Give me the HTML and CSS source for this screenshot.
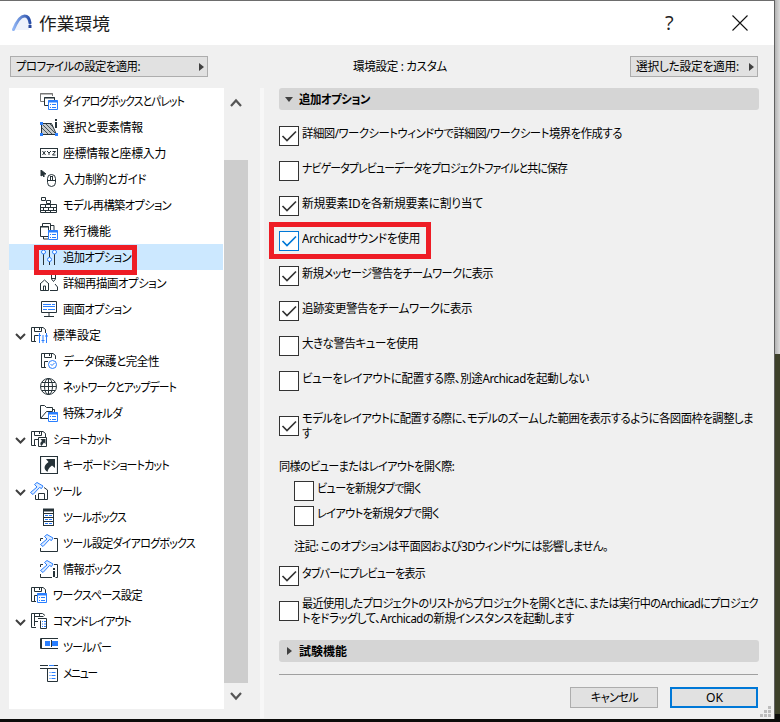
FILE: index.html
```html
<!DOCTYPE html>
<html lang="ja">
<head>
<meta charset="utf-8">
<title>作業環境</title>
<link rel="stylesheet" href="styles.css">
</head>
<body>
<svg class="defs" width="0" height="0">
  <defs>
    <g id="hammer" fill="#dcebff" stroke="#2a7fff"><path d="M4.500 2.500 7 .5l6 3.500-1.500 2.500-2-1L3 12.500.5 10.500 7 5z"/></g>
    <g id="window"><path d="M8.500 8.500h9v9h-9z" fill="#fff" stroke="#2a7fff"/><path d="M8 9.500h10" stroke="#2a7fff" stroke-width="2"/><path d="M10 12.500h1m1 0h4m-6 3h1m1 0h4" stroke="#2a7fff"/></g>
    <g id="disk"><path d="M15.500 7V3.500L13 1.500H1.500v14H6M4.500 2v3.500h7V2M9.500 2v2M4.500 15V9.500H8"/></g>
    <g id="chev"><path d="m1 1 4.500 4.500L10 1" fill="none" stroke="#404040" stroke-width="2"/></g>
    <g id="tick"><path d="m2.500 9 4.500 4.500L16 4.500" fill="none" stroke="currentColor" stroke-width="1.700"/></g>
  </defs>
</svg>
<div class="dialog">
  <header class="titlebar">
    <svg class="logo" width="22" height="20" viewBox="0 0 22 20"><defs><linearGradient id="lg" x1="0" x2="1"><stop offset="0" stop-color="#8fb4f4"/><stop offset="1" stop-color="#2a4fa8"/></linearGradient></defs><path d="M4 17C8 6 13 1 18 6v11z" fill="#eef2fb"/><path d="M2.500 16.500C6 8 9.500 3 13.500 3c3.500 0 5 3 5.500 7" fill="none" stroke="url(#lg)" stroke-width="3" stroke-linecap="round"/><path d="M17.500 12h3v3h-3z" fill="#27479b"/></svg>
    <h1><span class="t" data-w="71">作業環境</span></h1>
    <span class="help">?</span>
    <svg class="close" width="16" height="16" viewBox="0 0 16 16"><path d="m.5.5 15 15m0-15-15 15" stroke="#111" stroke-width="1.100"/></svg>
  </header>
  <div class="toolbar">
    <button class="drop profile"><span class="t" data-w="124">プロファイルの設定を適用:</span><i class="tri"></i></button>
    <div class="status"><span class="t" data-w="94">環境設定 : カスタム</span></div>
    <button class="drop chosen"><span class="t" data-w="103">選択した設定を適用:</span><i class="tri"></i></button>
  </div>
  <div class="body">
    <ul class="tree">
      <li class="sub"><svg class="ic" viewBox="0 0 18 18"><path d="M12.500 4V1.500H.5v8H4M0 2h13" stroke="#777"/><path d="M8 13.500H4.500v-8h10V8M4 6h11"/><use href="#window"/></svg><span class="t" data-w="121">ダイアログボックスとパレット</span></li>
      <li class="sub"><svg class="ic" viewBox="0 0 18 18"><path d="M1.500 5.500h10l5 11h-15z" fill="#c4c8ca"/><path d="m2 6 10 10M2 10l6 6M6 6l10 10M10 6l3 3" stroke-width=".8"/><path d="M0 4h3v3H0zm0 11h3v3H0zm15 0h3v3h-3z" fill="#2a7fff" stroke="none"/><path d="M16 1v2m0 1v6" stroke-width="2"/></svg><span class="t" data-w="80">選択と要素情報</span></li>
      <li class="sub"><svg class="ic" viewBox="0 0 18 18"><rect x=".5" y="4.500" width="17" height="9"/><path d="m2.500 7 3 4m0-4-3 4M7 7l2 2 2-2M9 9v2m3.500-3.500h3L12.500 11h3"/></svg><span class="t" data-w="103">座標情報と座標入力</span></li>
      <li class="sub"><svg class="ic" viewBox="0 0 18 18"><path d="M1 0v6l1.500-1L4 7V4h2z" fill="#263238"/><rect x="7.500" y="4.500" width="8" height="12" rx="4"/><path d="M7.500 10.500h8"/><rect x="10.500" y="6.500" width="2" height="4" fill="#fff"/></svg><span class="t" data-w="83">入力制約とガイド</span></li>
      <li class="sub"><svg class="ic" viewBox="0 0 18 18"><path d="M1.500 1.500h4v3h-4zm5 3h4v3h-4zM.5 8.500h16v8H.5zM0 11.500h17M0 14.500h17M5.500 9v2m5-2v2m-7 1v2m5-2v2m5-2v2m-8 1v2m5-2v2"/></svg><span class="t" data-w="108">モデル再構築オプション</span></li>
      <li class="sub"><svg class="ic" viewBox="0 0 18 18"><path d="M.5 4.500h8v10h-8zM2.500 4V1.500h8V11M0 5h9M11 3.500h3V8M3.500 15v2H8"/><use href="#window"/></svg><span class="t" data-w="48">発行機能</span></li>
      <li class="sub selected"><svg class="ic" viewBox="0 0 18 18"><path d="M3.500 5v12M9.500 0v9m0 4v4M14.500 5v12"/><g stroke="#2a7fff" fill="#fff"><circle cx="3.500" cy="4" r="2"/><circle cx="9.500" cy="11.500" r="2"/><circle cx="14.500" cy="4" r="2"/></g></svg><span class="t" data-w="68">追加オプション</span><div class="mark mark-tree"></div></li>
      <li class="sub"><svg class="ic" viewBox="0 0 18 18"><path d="M.5 9.500v7h8v-7M0 10l4.500-4L9 10M3.500 16v-4h2v4M11.500 0v5l2 2.500 2-2.500V0M11.500 4.500h4M10 16.500h7.500V13L15 10"/></svg><span class="t" data-w="103">詳細再描画オプション</span></li>
      <li class="sub"><svg class="ic" viewBox="0 0 18 18"><path d="M1.500 1.500h15v11h-15zM9 13v3M4 16.500h10"/><path d="M3 4.500h8m1 0h3M3 6.500h12M3 9.500h4m1 0h7" stroke="#2a7fff"/></svg><span class="t" data-w="68">画面オプション</span></li>
      <li class="top"><svg class="chev" viewBox="0 0 11 7"><use href="#chev"/></svg><svg class="ic" viewBox="0 0 18 18"><use href="#disk"/><path d="M9.500 7v10m3.500-8v8m3.500-10v10M8 9.500h3m.5 5h3M15 10h3" stroke="#2a7fff"/></svg><span class="t" data-w="48">標準設定</span></li>
      <li class="sub"><svg class="ic" viewBox="0 0 18 18"><use href="#disk"/><circle cx="12.500" cy="12.500" r="4" fill="#fff" stroke="#2a7fff"/><path d="m10.500 12 1.500 1.500 2.500-2.500" stroke="#2a7fff"/></svg><span class="t" data-w="96">データ保護と完全性</span></li>
      <li class="sub"><svg class="ic" viewBox="0 0 18 18"><circle cx="8.500" cy="8.500" r="8"/><ellipse cx="8.500" cy="8.500" rx="4" ry="8"/><path d="M8.500.5v16M.5 8.500h16M2 4.500h13M2 12.500h13"/></svg><span class="t" data-w="113">ネットワークとアップデート</span></li>
      <li class="sub"><svg class="ic" viewBox="0 0 18 18"><path d="M8 14.500H.5v-13h4l2 2h6v4h-6L1 14M12.500 5.500h2V8"/><use href="#window"/></svg><span class="t" data-w="59">特殊フォルダ</span></li>
      <li class="top"><svg class="chev" viewBox="0 0 11 7"><use href="#chev"/></svg><svg class="ic" viewBox="0 0 18 18"><use href="#disk"/><path d="M8.500 7.500h8v9h-8z" fill="#fff"/><path d="M10.500 9h5v5l-1.500-1.500-2.500 3.500c-2-2-1-4 .5-5z" fill="#263238" stroke="none"/></svg><span class="t" data-w="58">ショートカット</span></li>
      <li class="sub"><svg class="ic" viewBox="0 0 18 18"><path d="M.5.5h17v17H.5z" stroke-width="1.200"/><path d="M6 3h9v9l-3-2.500C8.500 12 8 14 7.500 16 3 13 4 9 8.500 6z" fill="#263238" stroke="none"/></svg><span class="t" data-w="106">キーボードショートカット</span></li>
      <li class="top"><svg class="chev" viewBox="0 0 11 7"><use href="#chev"/></svg><svg class="ic" viewBox="0 0 18 18"><path d="M5.500 13v4.500h12V8L14 5.500M8.500 17v-5.500h6V17"/><use href="#hammer"/></svg><span class="t" data-w="28">ツール</span></li>
      <li class="sub"><svg class="ic" viewBox="0 0 18 18"><path d="M3.500 1v17M13.500 1v17M3 5.500h11M3 9.500h11M3 13.500h11M3 17.500h11"/><path d="M3 2h11" stroke-width="3"/><path d="M5 7.500h3m1 0h3m-7 4h3m1 0h3m-7 4h3m1 0h3" stroke="#2a7fff"/></svg><span class="t" data-w="63">ツールボックス</span></li>
      <li class="sub"><svg class="ic" viewBox="0 0 18 18"><path d="M.5 7V4.500H3M14 4.500h3.500v13H.5V14"/><use href="#hammer"/></svg><span class="t" data-w="132">ツール設定ダイアログボックス</span></li>
      <li class="sub"><svg class="ic" viewBox="0 0 18 18"><path d="M.5 7V4.500H3M14 4.500h3.500v13h-2M12 17.500H.5V14"/><use href="#hammer"/><path d="M14 8v2m0 1v6" stroke-width="2"/></svg><span class="t" data-w="58">情報ボックス</span></li>
      <li class="top"><svg class="ic" viewBox="0 0 18 18"><use href="#disk"/><g transform="translate(-1 -1)"><use href="#window"/></g></svg><span class="t" data-w="89">ワークスペース設定</span></li>
      <li class="top"><svg class="chev" viewBox="0 0 11 7"><use href="#chev"/></svg><svg class="ic" viewBox="0 0 18 18"><path d="M15 3.500 12.500 1.500h-11v14H6M4.500 2v12M4.500 4.500h9M9.500 2v2M4.500 9.500H8M8 6.500h8.500v10h-6v-8"/><path d="M12 9.500h1m1 0h2m-4 2.500h1m1 0h2m-4 2.500h1m1 0h2" stroke="#2a7fff"/></svg><span class="t" data-w="78">コマンドレイアウト</span></li>
      <li class="sub"><svg class="ic" viewBox="0 0 18 18"><path d="M18 .5H.5v10H18M1.500 0v11"/><path d="M5 3h5v5H5zm7 0h6v5h-6z" fill="#2a7fff" stroke="none"/><path d="M11.500 2v7"/></svg><span class="t" data-w="48">ツールバー</span></li>
      <li class="sub"><svg class="ic" viewBox="0 0 18 18"><path d="M0 1.500h8m6 0h4M0 4.500h17.500v13h-10v-13"/><path d="M9 1.500h5M9.500 8.500h1m1 0h4m-6 3h1m1 0h4m-6 3h1m1 0h4" stroke="#2a7fff"/></svg><span class="t" data-w="34">メニュー</span></li>
    </ul>
    <div class="scroll">
      <svg width="12" height="9" viewBox="0 0 12 9"><path d="m1 8 5-5.500L11 8" fill="none" stroke="#555" stroke-width="2.200"/></svg>
      <div class="thumb"></div>
      <svg width="12" height="9" viewBox="0 0 12 9"><path d="m1 1 5 5.500L11 1" fill="none" stroke="#555" stroke-width="2.200"/></svg>
    </div>
    <div class="divider"></div>
    <main class="pane">
      <h2 class="section"><i class="tri down"></i><span class="t" data-w="71">追加オプション</span></h2>
      <div class="options">
        <label class="opt"><svg class="box"><use href="#tick"/></svg><span class="t" data-w="320">詳細図/ワークシートウィンドウで詳細図/ワークシート境界を作成する</span></label>
        <label class="opt"><svg class="box"></svg><span class="t" data-w="265">ナビゲータプレビューデータをプロジェクトファイルと共に保存</span></label>
        <label class="opt"><svg class="box"><use href="#tick"/></svg><span class="t" data-w="181">新規要素IDを各新規要素に割り当て</span></label>
        <label class="opt"><svg class="box active"><use href="#tick"/></svg><span class="t" data-w="118">Archicadサウンドを使用</span><div class="mark mark-opt"></div></label>
        <label class="opt"><svg class="box"><use href="#tick"/></svg><span class="t" data-w="191">新規メッセージ警告をチームワークに表示</span></label>
        <label class="opt"><svg class="box"><use href="#tick"/></svg><span class="t" data-w="170">追跡変更警告をチームワークに表示</span></label>
        <label class="opt"><svg class="box"></svg><span class="t" data-w="116">大きな警告キューを使用</span></label>
        <label class="opt"><svg class="box"></svg><span class="t" data-w="287">ビューをレイアウトに配置する際、別途Archicadを起動しない</span></label>
      </div>
      <label class="opt wide"><svg class="box"><use href="#tick"/></svg><div class="lines"><span class="t" data-w="451">モデルをレイアウトに配置する際に、モデルのズームした範囲を表示するように各図面枠を調整しま</span><span class="t" data-w="9">す</span></div></label>
      <p class="lead"><span class="t" data-w="175">同様のビューまたはレイアウトを開く際:</span></p>
      <div class="nested">
        <label class="opt"><svg class="box"></svg><span class="t" data-w="104">ビューを新規タブで開く</span></label>
        <label class="opt"><svg class="box"></svg><span class="t" data-w="122">レイアウトを新規タブで開く</span></label>
        <p><span class="t" data-w="314">注記: このオプションは平面図および3Dウィンドウには影響しません。</span></p>
      </div>
      <div class="options late">
        <label class="opt"><svg class="box"><use href="#tick"/></svg><span class="t" data-w="123">タブバーにプレビューを表示</span></label>
        <label class="opt"><svg class="box"></svg><div class="lines"><span class="t" data-w="456">最近使用したプロジェクトのリストからプロジェクトを開くときに、または実行中のArchicadにプロジェク</span><span class="t" data-w="272">トをドラッグして、Archicadの新規インスタンスを起動します</span></div></label>
      </div>
      <h2 class="section second"><i class="tri"></i><span class="t" data-w="48">試験機能</span></h2>
      <footer class="actions">
        <button class="btn"><span class="t" data-w="47">キャンセル</span></button>
        <button class="btn primary"><span class="t" data-w="17">OK</span></button>
      </footer>
    </main>
  </div>
  <svg class="grip" width="11" height="11"><path d="M8 0h3v3H8zM4 4h3v3H4zm4 0h3v3H8zM0 8h3v3H0zm4 0h3v3H4zm4 0h3v3H8z" fill="#bdbdbd"/></svg>
</div>
<script src="fit.js"></script>
</body>
</html>
```
FILE: styles.css
```css
* { box-sizing: border-box; }
body {
  margin: 0; width: 780px; height: 722px; overflow: hidden;
  background: linear-gradient(90deg, #aaa 774px, #dcdcdc 780px) 0 0 / 100% 354px no-repeat, linear-gradient(#0c0c0a, #0c0c0a) 0 714px / 100% 8px no-repeat, #3d4029;
  font: 12px/15px "Noto Sans", "Noto Sans CJK JP", sans-serif; color: #000;
}
.defs { position: absolute; }
.dialog {
  position: relative; width: 775px; height: 719px; background: #f0f0f0;
  border-top: 1px solid #6d6d6d; border-right: 1px solid #606060;
}
h1, h2, p, ul { margin: 0; padding: 0; font-weight: 400; }
button { font: inherit; color: inherit; padding: 0; }
.t {
  display: inline-block; white-space: nowrap; transform-origin: 0 50%;
  font-feature-settings: "palt"; font-family: "Noto Sans", "Noto Sans CJK JP", sans-serif;
}
.titlebar { display: flex; align-items: center; height: 44px; background: #fff; padding-left: 11px; }
.titlebar h1 { font-size: 17.5px; line-height: 24px; width: 626px; margin-left: 6px; color: #1c1c1c; }
.help { width: 20px; font: 20px/24px "Open Sans", sans-serif; color: #222; }
.close { margin-left: 47px; margin-top: -1px; margin-right: auto; }
.toolbar { display: flex; height: 43px; padding: 11px 16px 0 10px; }
.drop { display: flex; align-items: center; justify-content: space-between; height: 21px; background: #e1e1e1; border: 1px solid #adadad; padding: 0 3px 0 5px; }
.profile { width: 198px; }
.status { width: 277px; margin-left: 145px; padding-top: 3px; }
.chosen { width: 128px; }
.tri { display: block; flex: none; border-left: 5px solid #404040; border-top: 4px solid transparent; border-bottom: 4px solid transparent; }
.tri.down { border: 4px solid transparent; border-top: 5px solid #404040; border-bottom: 0; }
.body { display: flex; height: 630px; padding-left: 9px; }
.tree { list-style: none; width: 215px; height: 621px; background: #fff; }
.tree li { display: flex; align-items: center; height: 26px; width: 214px; padding-left: 31px; position: relative; }
.tree li.top { padding-left: 21px; }
.tree .selected { background: #cce8ff; }
.tree .ic { width: 18px; height: 18px; fill: none; stroke: #263238; flex: none; margin-right: 5px; }
.chev { width: 11px; height: 7px; margin-left: -15px; margin-right: 4px; margin-top: 3px; flex: none; }
.scroll { width: 24px; display: flex; flex-direction: column; align-items: center; height: 621px; padding: 10px 0 8px; justify-content: space-between; }
.thumb { width: 24px; height: 523px; background: #cdcdcd; margin-top: 53px; margin-bottom: 9px; }
.divider { width: 4px; margin-left: 12px; background: #f7f7f7; }
.pane { margin-left: 15px; width: 480px; }
.section { display: flex; align-items: center; height: 22px; background: #d5d5d5; border-radius: 3px; font-size: 12px; font-weight: 700; line-height: 15px; padding-left: 6px; }
.section .tri { margin-right: 6px; }
.section .tri:not(.down) { margin-left: 2px; margin-right: 7px; }
.options { display: grid; gap: 15px; margin-top: 16px; }
.opt { display: flex; align-items: flex-start; height: 20px; position: relative; }
.box { width: 20px; height: 20px; flex: none; border: 1px solid #333; background: #fff; color: #333; margin-right: 3px; }
.box.active { border-color: #0078d7; color: #0078d7; }
.lines { display: flex; flex-direction: column; align-items: flex-start; margin-top: -5px; }
.wide { margin-top: 25px; }
.lead { margin-top: 23px; height: 15px; }
.nested { display: grid; gap: 5px; padding-left: 15px; margin-top: 7px; }
.nested p { margin-top: 8px; height: 15px; }
.options.late { margin-top: 12px; }
.section.second { margin-top: 19px; }
.actions { display: flex; gap: 12px; justify-content: flex-end; width: 479px; margin-top: 12px; padding-top: 12px; border-top: 1px solid #a0a0a0; }
.btn { width: 88px; height: 21px; background: #e1e1e1; border: 1px solid #adadad; display: flex; align-items: center; justify-content: center; }
.btn.primary { border: 2px solid #0078d7; }
.mark { position: absolute; border: 5px solid #ee1c25; }
.mark-tree { left: 25px; top: 1px; width: 103px; height: 30px; z-index: 2; }
.mark-opt { left: -10px; top: -9px; width: 162px; height: 37px; }
.grip { position: absolute; right: 3px; bottom: 2px; }
```
FILE: fit.js
```js
// Condense each label to its nominal width: half by tracking, the rest by scaling.
document.querySelectorAll('.t').forEach(function (el) {
  var target = Number(el.dataset.w);
  var count = el.textContent.length;
  var natural = el.offsetWidth;
  var tracking = (target - natural) / count / 2;
  el.style.letterSpacing = tracking + 'px';
  var box = el.getBoundingClientRect().width;
  el.style.transform = 'scaleX(' + target / box + ')';
  el.style.marginRight = (target - box) + 'px';
});
```
